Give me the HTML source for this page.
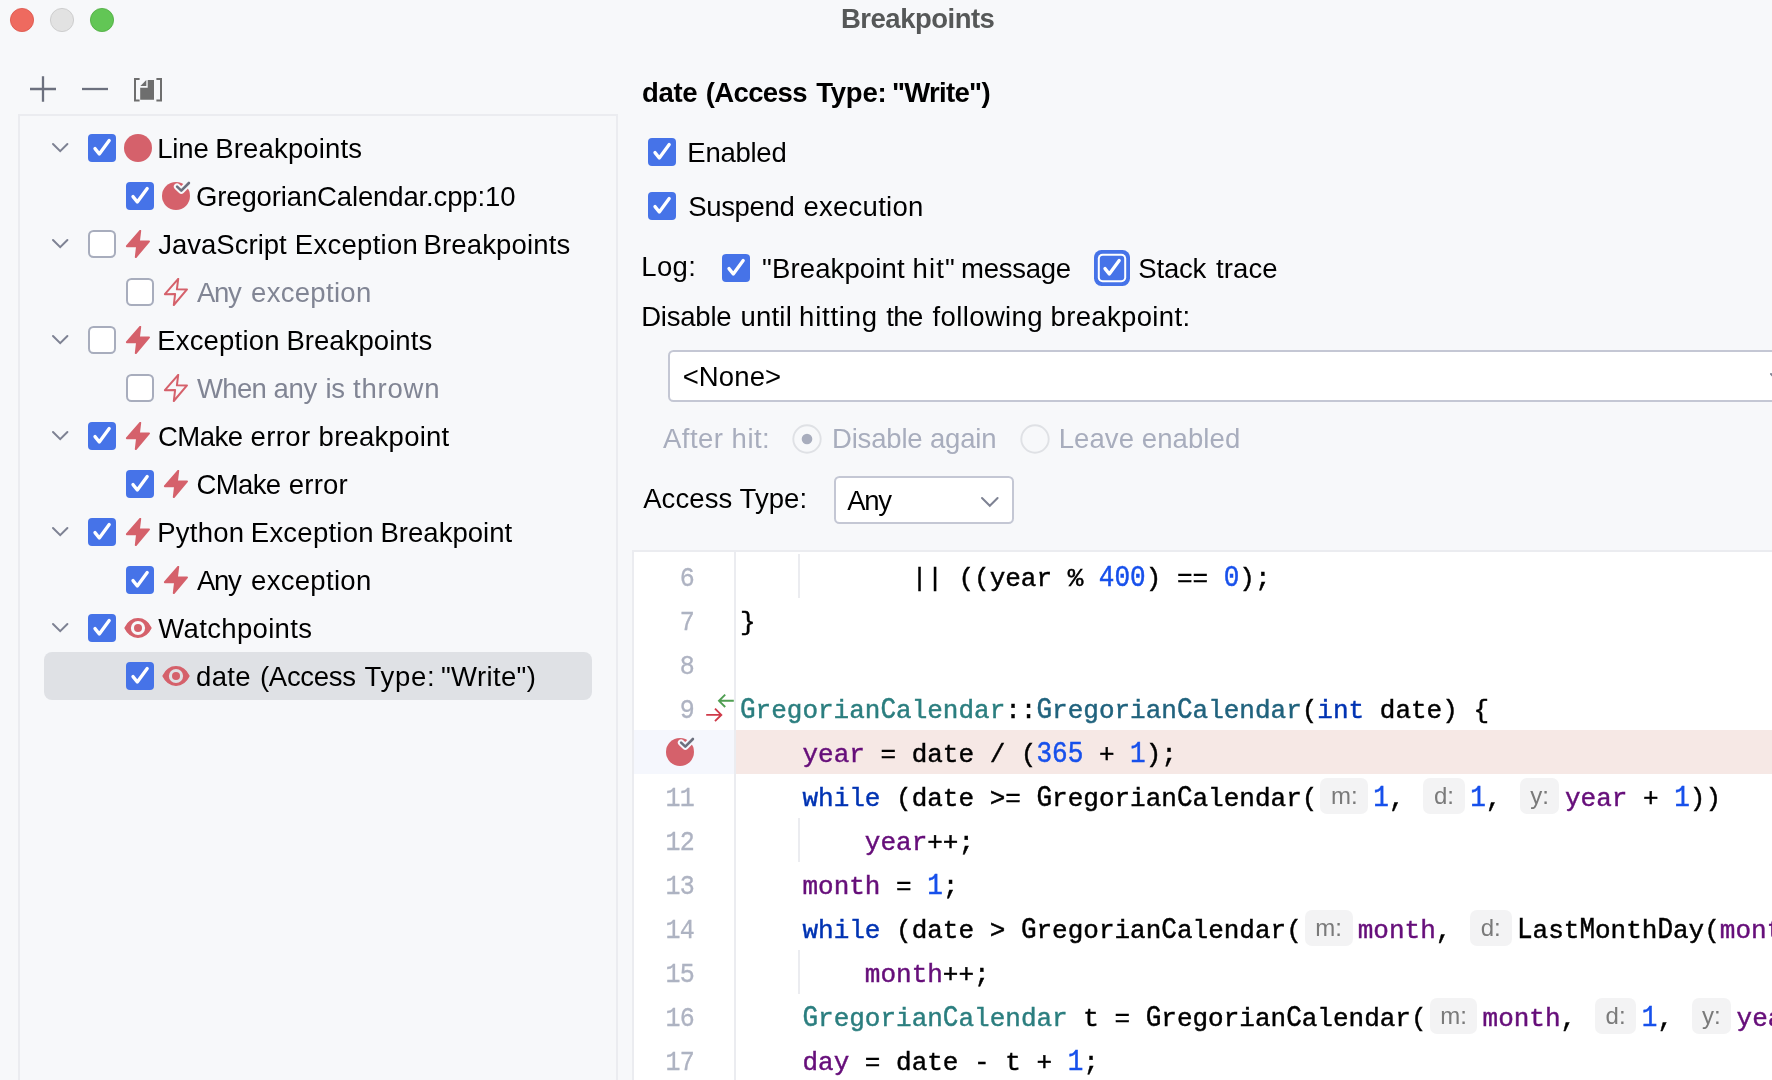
<!DOCTYPE html>
<html><head><meta charset="utf-8"><title>Breakpoints</title>
<style>
html,body{margin:0;padding:0}
body{width:1772px;height:1080px;overflow:hidden;background:#f7f8fa;font-family:"Liberation Sans", sans-serif;}
#w{position:relative;width:1772px;height:1080px;overflow:hidden;background:#f7f8fa;will-change:transform}
.a{position:absolute;display:block}
.t{position:absolute;white-space:pre;line-height:32px;font-family:"Liberation Sans", sans-serif}
#tree{position:absolute;left:18px;top:114px;width:596px;height:1000px;border:2px solid #ebecf0;box-sizing:content-box}
#sel{position:absolute;left:44px;top:652px;width:548px;height:48px;border-radius:8px;background:#dfe1e5}
#dd1{position:absolute;left:668px;top:350px;width:1200px;height:48px;border:2px solid #c4c7d4;border-radius:5.5px;background:#fff}
#dd2{position:absolute;left:834px;top:476px;width:176px;height:44px;border:2px solid #c4c7d4;border-radius:5.5px;background:#fff}
#ed{position:absolute;left:632px;top:550px;width:1200px;height:600px;border-left:2px solid #ebecf0;border-top:2px solid #ebecf0;background:#fff}
#gsep{position:absolute;left:734px;top:552px;width:2px;height:600px;background:#ebecf0}
#hl{position:absolute;left:736px;top:730px;width:1100px;height:44px;background:#f6e8e5}
#hlg{position:absolute;left:634px;top:730px;width:100px;height:44px;background:#f5f7fd}
.ig{position:absolute;left:798px;width:2px;background:#ebecf0}
.ln{position:absolute;left:634px;margin-top:4px;width:60px;text-align:right;font-family:"Liberation Mono", monospace;font-size:25px;letter-spacing:-0.7px;color:#aeb3c2;line-height:44px;height:44px;white-space:pre;transform-origin:0 29px;transform:scaleY(1.1);-webkit-text-stroke:0.3px}
.cl{position:absolute;left:740px;margin-top:3px;font-family:"Liberation Mono", monospace;font-size:26px;letter-spacing:0.00px;color:#000;line-height:44px;height:44px;white-space:pre;-webkit-text-stroke:0.45px}
.cl i{font-style:normal;display:inline-block;line-height:44px;transform-origin:0 29px;transform:scaleY(1.11)}
.h{display:inline-block;box-sizing:border-box;height:35.6px;line-height:35.6px;vertical-align:baseline;border-radius:7px;background:#f3f3f4;color:#7a7a7a;font-family:"Liberation Sans", sans-serif;font-size:24px;letter-spacing:0;text-align:center;position:relative;top:-2px;-webkit-text-stroke:0}
</style></head>
<body><div id="w">
<svg class="a" style="left:0;top:0" width="130" height="40"><circle cx="22" cy="20" r="11.6" fill="#ee6a5f" stroke="#dc5347" stroke-width="0.8"/><circle cx="62" cy="20" r="11.6" fill="#e2e2e2" stroke="#c6c6c6" stroke-width="0.8"/><circle cx="102" cy="20" r="11.6" fill="#62c655" stroke="#4dab3e" stroke-width="0.8"/></svg>
<svg class="a" style="left:0;top:60px" width="200" height="54" viewBox="0 60 200 54"><path d="M30 89 H56 M43 76.2 V101.8" stroke="#6c707e" stroke-width="2.3" fill="none"/><path d="M82 89 H108" stroke="#6c707e" stroke-width="2.3" fill="none"/><path d="M139.6 79 H135 V100.6 H139.6 M156.4 79 H161 V100.6 H156.4" stroke="#6e6e6e" stroke-width="2" fill="none"/><polygon points="147.7,79.9 154,79.9 154,99.8 140.2,99.8 140.2,87.8 147.7,87.8" fill="#6e6e6e"/><polygon points="140.4,86 146.3,80.1 146.3,86" fill="#6e6e6e"/></svg>
<div id="tree"></div>
<div id="sel"></div>
<div id="dd1"></div>
<div id="dd2"></div>
<div id="ed"></div>
<div id="hlg"></div>
<div id="hl"></div>
<div id="gsep"></div>
<div class="ig" style="top:554px;height:44px"></div>
<div class="ig" style="top:818px;height:44px"></div>
<div class="ig" style="top:950px;height:44px"></div>
<svg class="a" style="left:49.80px;top:141.30px" width="20.4" height="13.2"><path d="M3 3 L10.2 10.2 L17.4 3" fill="none" stroke="#7e8293" stroke-width="2" stroke-linecap="round" stroke-linejoin="miter"/></svg><svg class="a" style="left:88px;top:134px" width="28" height="28" viewBox="0 0 28 28"><rect width="28" height="28" rx="4" fill="#4673e8"/><path d="M7 14.6 L11.3 20 L21.2 6.6" fill="none" stroke="#fff" stroke-width="3.3" stroke-linecap="round" stroke-linejoin="round"/></svg><svg class="a" style="left:124px;top:134px" width="28" height="28"><circle cx="14" cy="14" r="14" fill="#d5616b"/></svg><svg class="a" style="left:126px;top:182px" width="28" height="28" viewBox="0 0 28 28"><rect width="28" height="28" rx="4" fill="#4673e8"/><path d="M7 14.6 L11.3 20 L21.2 6.6" fill="none" stroke="#fff" stroke-width="3.3" stroke-linecap="round" stroke-linejoin="round"/></svg><svg class="a" style="left:162px;top:180px;overflow:visible" width="30" height="30" viewBox="0 -2 30 30"><circle cx="14" cy="14" r="14" fill="#d5616b"/><path d="M15.1 4.6 L19.3 8.6 L26.9 1.0" fill="none" stroke="#f7f8fa" stroke-width="6.5" stroke-linecap="round" stroke-linejoin="round"/><path d="M15.1 4.6 L19.3 8.6 L26.9 1.0" fill="none" stroke="#6c707e" stroke-width="2.6" stroke-linecap="round" stroke-linejoin="round"/></svg><svg class="a" style="left:49.80px;top:237.30px" width="20.4" height="13.2"><path d="M3 3 L10.2 10.2 L17.4 3" fill="none" stroke="#7e8293" stroke-width="2" stroke-linecap="round" stroke-linejoin="miter"/></svg><svg class="a" style="left:88px;top:230px" width="28" height="28" viewBox="0 0 28 28"><rect x="1" y="1" width="26" height="26" rx="4.5" fill="#fff" stroke="#a8adbd" stroke-width="2"/></svg><svg class="a" style="left:124px;top:230px" width="28" height="28"><polygon points="16.2,0.8 14.9,11.3 25.0,11.4 11.8,27.0 13.1,16.1 2.9,16.2" fill="#d5616b" stroke="#d5616b" stroke-width="2" stroke-linejoin="round"/></svg><svg class="a" style="left:126px;top:278px" width="28" height="28" viewBox="0 0 28 28"><rect x="1" y="1" width="26" height="26" rx="4.5" fill="#fff" stroke="#a8adbd" stroke-width="2"/></svg><svg class="a" style="left:162px;top:278px" width="28" height="28"><polygon points="16.2,0.8 14.9,11.3 25.0,11.4 11.8,27.0 13.1,16.1 2.9,16.2" fill="none" stroke="#d5616b" stroke-width="2" stroke-linejoin="round"/></svg><svg class="a" style="left:49.80px;top:333.30px" width="20.4" height="13.2"><path d="M3 3 L10.2 10.2 L17.4 3" fill="none" stroke="#7e8293" stroke-width="2" stroke-linecap="round" stroke-linejoin="miter"/></svg><svg class="a" style="left:88px;top:326px" width="28" height="28" viewBox="0 0 28 28"><rect x="1" y="1" width="26" height="26" rx="4.5" fill="#fff" stroke="#a8adbd" stroke-width="2"/></svg><svg class="a" style="left:124px;top:326px" width="28" height="28"><polygon points="16.2,0.8 14.9,11.3 25.0,11.4 11.8,27.0 13.1,16.1 2.9,16.2" fill="#d5616b" stroke="#d5616b" stroke-width="2" stroke-linejoin="round"/></svg><svg class="a" style="left:126px;top:374px" width="28" height="28" viewBox="0 0 28 28"><rect x="1" y="1" width="26" height="26" rx="4.5" fill="#fff" stroke="#a8adbd" stroke-width="2"/></svg><svg class="a" style="left:162px;top:374px" width="28" height="28"><polygon points="16.2,0.8 14.9,11.3 25.0,11.4 11.8,27.0 13.1,16.1 2.9,16.2" fill="none" stroke="#d5616b" stroke-width="2" stroke-linejoin="round"/></svg><svg class="a" style="left:49.80px;top:429.30px" width="20.4" height="13.2"><path d="M3 3 L10.2 10.2 L17.4 3" fill="none" stroke="#7e8293" stroke-width="2" stroke-linecap="round" stroke-linejoin="miter"/></svg><svg class="a" style="left:88px;top:422px" width="28" height="28" viewBox="0 0 28 28"><rect width="28" height="28" rx="4" fill="#4673e8"/><path d="M7 14.6 L11.3 20 L21.2 6.6" fill="none" stroke="#fff" stroke-width="3.3" stroke-linecap="round" stroke-linejoin="round"/></svg><svg class="a" style="left:124px;top:422px" width="28" height="28"><polygon points="16.2,0.8 14.9,11.3 25.0,11.4 11.8,27.0 13.1,16.1 2.9,16.2" fill="#d5616b" stroke="#d5616b" stroke-width="2" stroke-linejoin="round"/></svg><svg class="a" style="left:126px;top:470px" width="28" height="28" viewBox="0 0 28 28"><rect width="28" height="28" rx="4" fill="#4673e8"/><path d="M7 14.6 L11.3 20 L21.2 6.6" fill="none" stroke="#fff" stroke-width="3.3" stroke-linecap="round" stroke-linejoin="round"/></svg><svg class="a" style="left:162px;top:470px" width="28" height="28"><polygon points="16.2,0.8 14.9,11.3 25.0,11.4 11.8,27.0 13.1,16.1 2.9,16.2" fill="#d5616b" stroke="#d5616b" stroke-width="2" stroke-linejoin="round"/></svg><svg class="a" style="left:49.80px;top:525.30px" width="20.4" height="13.2"><path d="M3 3 L10.2 10.2 L17.4 3" fill="none" stroke="#7e8293" stroke-width="2" stroke-linecap="round" stroke-linejoin="miter"/></svg><svg class="a" style="left:88px;top:518px" width="28" height="28" viewBox="0 0 28 28"><rect width="28" height="28" rx="4" fill="#4673e8"/><path d="M7 14.6 L11.3 20 L21.2 6.6" fill="none" stroke="#fff" stroke-width="3.3" stroke-linecap="round" stroke-linejoin="round"/></svg><svg class="a" style="left:124px;top:518px" width="28" height="28"><polygon points="16.2,0.8 14.9,11.3 25.0,11.4 11.8,27.0 13.1,16.1 2.9,16.2" fill="#d5616b" stroke="#d5616b" stroke-width="2" stroke-linejoin="round"/></svg><svg class="a" style="left:126px;top:566px" width="28" height="28" viewBox="0 0 28 28"><rect width="28" height="28" rx="4" fill="#4673e8"/><path d="M7 14.6 L11.3 20 L21.2 6.6" fill="none" stroke="#fff" stroke-width="3.3" stroke-linecap="round" stroke-linejoin="round"/></svg><svg class="a" style="left:162px;top:566px" width="28" height="28"><polygon points="16.2,0.8 14.9,11.3 25.0,11.4 11.8,27.0 13.1,16.1 2.9,16.2" fill="#d5616b" stroke="#d5616b" stroke-width="2" stroke-linejoin="round"/></svg><svg class="a" style="left:49.80px;top:621.30px" width="20.4" height="13.2"><path d="M3 3 L10.2 10.2 L17.4 3" fill="none" stroke="#7e8293" stroke-width="2" stroke-linecap="round" stroke-linejoin="miter"/></svg><svg class="a" style="left:88px;top:614px" width="28" height="28" viewBox="0 0 28 28"><rect width="28" height="28" rx="4" fill="#4673e8"/><path d="M7 14.6 L11.3 20 L21.2 6.6" fill="none" stroke="#fff" stroke-width="3.3" stroke-linecap="round" stroke-linejoin="round"/></svg><svg class="a" style="left:124px;top:618px" width="28" height="20" viewBox="0 0 28 20"><path d="M1.1 10 C4.2 3.6 8.8 0.8 14 0.8 C19.2 0.8 23.8 3.6 26.9 10 C23.8 16.4 19.2 19.2 14 19.2 C8.8 19.2 4.2 16.4 1.1 10 Z" fill="#d5616b" stroke="#d5616b" stroke-width="1.6" stroke-linejoin="round"/><circle cx="14" cy="10" r="7.1" fill="#f7f8fa"/><circle cx="14" cy="10" r="4" fill="#d5616b"/></svg><svg class="a" style="left:126px;top:662px" width="28" height="28" viewBox="0 0 28 28"><rect width="28" height="28" rx="4" fill="#4673e8"/><path d="M7 14.6 L11.3 20 L21.2 6.6" fill="none" stroke="#fff" stroke-width="3.3" stroke-linecap="round" stroke-linejoin="round"/></svg><svg class="a" style="left:162px;top:666px" width="28" height="20" viewBox="0 0 28 20"><path d="M1.1 10 C4.2 3.6 8.8 0.8 14 0.8 C19.2 0.8 23.8 3.6 26.9 10 C23.8 16.4 19.2 19.2 14 19.2 C8.8 19.2 4.2 16.4 1.1 10 Z" fill="#d5616b" stroke="#d5616b" stroke-width="1.6" stroke-linejoin="round"/><circle cx="14" cy="10" r="7.1" fill="#dfe1e5"/><circle cx="14" cy="10" r="4" fill="#d5616b"/></svg><svg class="a" style="left:648px;top:138px" width="28" height="28" viewBox="0 0 28 28"><rect width="28" height="28" rx="4" fill="#4673e8"/><path d="M7 14.6 L11.3 20 L21.2 6.6" fill="none" stroke="#fff" stroke-width="3.3" stroke-linecap="round" stroke-linejoin="round"/></svg><svg class="a" style="left:648px;top:192px" width="28" height="28" viewBox="0 0 28 28"><rect width="28" height="28" rx="4" fill="#4673e8"/><path d="M7 14.6 L11.3 20 L21.2 6.6" fill="none" stroke="#fff" stroke-width="3.3" stroke-linecap="round" stroke-linejoin="round"/></svg><svg class="a" style="left:722px;top:254px" width="28" height="28" viewBox="0 0 28 28"><rect width="28" height="28" rx="4" fill="#4673e8"/><path d="M7 14.6 L11.3 20 L21.2 6.6" fill="none" stroke="#fff" stroke-width="3.3" stroke-linecap="round" stroke-linejoin="round"/></svg><svg class="a" style="left:1094px;top:250px" width="36" height="36" viewBox="0 0 36 36"><rect width="36" height="36" rx="7.5" fill="#4673e8"/><rect x="3.8" y="3.8" width="28.4" height="28.4" rx="4.8" fill="#fff"/><rect x="5.8" y="5.8" width="24.4" height="24.4" rx="3" fill="#4673e8"/><path d="M11 18.6 L15.3 24 L25.2 10.6" fill="none" stroke="#fff" stroke-width="3.3" stroke-linecap="round" stroke-linejoin="round"/></svg><svg class="a" style="left:792px;top:424px" width="30" height="30"><circle cx="15" cy="15" r="13.7" fill="#f7f8fa" stroke="#dfe1e5" stroke-width="1.9"/><circle cx="15" cy="15" r="5.3" fill="#a8adbd"/></svg><svg class="a" style="left:1020px;top:424px" width="30" height="30"><circle cx="15" cy="15" r="13.7" fill="#f7f8fa" stroke="#dfe1e5" stroke-width="1.9"/></svg><svg class="a" style="left:979.20px;top:495.30px" width="21.6" height="13.8"><path d="M3 3 L10.8 10.8 L18.6 3" fill="none" stroke="#7e8293" stroke-width="2" stroke-linecap="round" stroke-linejoin="miter"/></svg><svg class="a" style="left:1767.80px;top:371.30px" width="21.6" height="13.8"><path d="M3 3 L10.8 10.8 L18.6 3" fill="none" stroke="#7e8293" stroke-width="2" stroke-linecap="round" stroke-linejoin="miter"/></svg>
<svg class="a" style="left:666px;top:736px;overflow:visible" width="30" height="30" viewBox="0 -2 30 30"><circle cx="14" cy="14" r="14" fill="#d5616b"/><path d="M15.1 4.6 L19.3 8.6 L26.9 1.0" fill="none" stroke="#f5f7fd" stroke-width="6.5" stroke-linecap="round" stroke-linejoin="round"/><path d="M15.1 4.6 L19.3 8.6 L26.9 1.0" fill="none" stroke="#6c707e" stroke-width="2.6" stroke-linecap="round" stroke-linejoin="round"/></svg><svg class="a" style="left:700px;top:690px" width="40" height="36" viewBox="700 690 40 36"><path d="M733.8 700.8 H719.6 M725.2 694.6 L719 700.8 L725.2 707" fill="none" stroke="#4f9e52" stroke-width="1.9"/><path d="M706.2 714.9 H720.6 M715 708.6 L721.3 714.9 L715 721.2" fill="none" stroke="#cf3a49" stroke-width="1.9"/></svg>
<span class="t" id="title" style="left:841.00px;top:3.00px;font-size:27.5px;letter-spacing:-0.504px;color:#565858;font-weight:700;">Breakpoints</span><span class="t" id="head_0" style="left:641.90px;top:77.00px;font-size:27.5px;letter-spacing:-0.283px;color:#000;font-weight:700;">date</span><span class="t" id="head_1" style="left:705.70px;top:77.00px;font-size:27.5px;letter-spacing:-0.616px;color:#000;font-weight:700;">(Access</span><span class="t" id="head_2" style="left:816.20px;top:77.00px;font-size:27.5px;letter-spacing:-0.186px;color:#000;font-weight:700;">Type:</span><span class="t" id="head_3" style="left:892.00px;top:77.00px;font-size:27.5px;letter-spacing:-0.704px;color:#000;font-weight:700;">"Write")</span><span class="t" id="r0_0" style="left:157.20px;top:133.00px;font-size:27.5px;letter-spacing:-0.166px;color:#000;">Line</span><span class="t" id="r0_1" style="left:215.30px;top:133.00px;font-size:27.5px;letter-spacing:0.153px;color:#000;">Breakpoints</span><span class="t" id="r1" style="left:196.00px;top:181.00px;font-size:27.5px;letter-spacing:-0.134px;color:#000;">GregorianCalendar.cpp:10</span><span class="t" id="r2_0" style="left:158.20px;top:229.00px;font-size:27.5px;letter-spacing:0.018px;color:#000;">JavaScript</span><span class="t" id="r2_1" style="left:294.80px;top:229.00px;font-size:27.5px;letter-spacing:0.291px;color:#000;">Exception</span><span class="t" id="r2_2" style="left:423.50px;top:229.00px;font-size:27.5px;letter-spacing:0.153px;color:#000;">Breakpoints</span><span class="t" id="r3_0" style="left:197.00px;top:277.00px;font-size:27.5px;letter-spacing:-1.368px;color:#818594;">Any</span><span class="t" id="r3_1" style="left:251.10px;top:277.00px;font-size:27.5px;letter-spacing:0.297px;color:#818594;">exception</span><span class="t" id="r4_0" style="left:157.20px;top:325.00px;font-size:27.5px;letter-spacing:0.191px;color:#000;">Exception</span><span class="t" id="r4_1" style="left:286.40px;top:325.00px;font-size:27.5px;letter-spacing:0.053px;color:#000;">Breakpoints</span><span class="t" id="r5_0" style="left:197.00px;top:373.00px;font-size:27.5px;letter-spacing:-0.681px;color:#818594;">When</span><span class="t" id="r5_1" style="left:273.40px;top:373.00px;font-size:27.5px;letter-spacing:-0.194px;color:#818594;">any</span><span class="t" id="r5_2" style="left:325.50px;top:373.00px;font-size:27.5px;letter-spacing:-0.310px;color:#818594;">is</span><span class="t" id="r5_3" style="left:353.10px;top:373.00px;font-size:27.5px;letter-spacing:0.771px;color:#818594;">thrown</span><span class="t" id="r6_0" style="left:158.00px;top:421.00px;font-size:27.5px;letter-spacing:-0.528px;color:#000;">CMake</span><span class="t" id="r6_1" style="left:250.60px;top:421.00px;font-size:27.5px;letter-spacing:0.374px;color:#000;">error</span><span class="t" id="r6_2" style="left:318.60px;top:421.00px;font-size:27.5px;letter-spacing:0.246px;color:#000;">breakpoint</span><span class="t" id="r7_0" style="left:196.50px;top:469.00px;font-size:27.5px;letter-spacing:-0.628px;color:#000;">CMake</span><span class="t" id="r7_1" style="left:288.70px;top:469.00px;font-size:27.5px;letter-spacing:0.249px;color:#000;">error</span><span class="t" id="r8_0" style="left:157.20px;top:517.00px;font-size:27.5px;letter-spacing:0.236px;color:#000;">Python</span><span class="t" id="r8_1" style="left:250.80px;top:517.00px;font-size:27.5px;letter-spacing:0.241px;color:#000;">Exception</span><span class="t" id="r8_2" style="left:380.40px;top:517.00px;font-size:27.5px;letter-spacing:0.041px;color:#000;">Breakpoint</span><span class="t" id="r9_0" style="left:197.00px;top:565.00px;font-size:27.5px;letter-spacing:-1.368px;color:#000;">Any</span><span class="t" id="r9_1" style="left:251.10px;top:565.00px;font-size:27.5px;letter-spacing:0.297px;color:#000;">exception</span><span class="t" id="r10" style="left:158.30px;top:613.00px;font-size:27.5px;letter-spacing:0.335px;color:#000;">Watchpoints</span><span class="t" id="r11_0" style="left:196.00px;top:661.00px;font-size:27.5px;letter-spacing:0.357px;color:#000;">date</span><span class="t" id="r11_1" style="left:260.00px;top:661.00px;font-size:27.5px;letter-spacing:-0.307px;color:#000;">(Access</span><span class="t" id="r11_2" style="left:364.60px;top:661.00px;font-size:27.5px;letter-spacing:0.720px;color:#000;">Type:</span><span class="t" id="r11_3" style="left:441.00px;top:661.00px;font-size:27.5px;letter-spacing:0.359px;color:#000;">"Write")</span><span class="t" id="en" style="left:687.30px;top:137.00px;font-size:27.5px;letter-spacing:-0.255px;color:#000;">Enabled</span><span class="t" id="sus_0" style="left:688.30px;top:191.00px;font-size:27.5px;letter-spacing:-0.362px;color:#000;">Suspend</span><span class="t" id="sus_1" style="left:803.40px;top:191.00px;font-size:27.5px;letter-spacing:0.272px;color:#000;">execution</span><span class="t" id="log" style="left:641.20px;top:251.00px;font-size:27.5px;letter-spacing:0.406px;color:#000;">Log:</span><span class="t" id="bph_0" style="left:762.10px;top:253.00px;font-size:27.5px;letter-spacing:0.121px;color:#000;">"Breakpoint</span><span class="t" id="bph_1" style="left:912.60px;top:253.00px;font-size:27.5px;letter-spacing:1.119px;color:#000;">hit"</span><span class="t" id="bph_2" style="left:961.00px;top:253.00px;font-size:27.5px;letter-spacing:-0.248px;color:#000;">message</span><span class="t" id="st_0" style="left:1138.30px;top:253.00px;font-size:27.5px;letter-spacing:-0.182px;color:#000;">Stack</span><span class="t" id="st_1" style="left:1216.00px;top:253.00px;font-size:27.5px;letter-spacing:0.114px;color:#000;">trace</span><span class="t" id="dis_0" style="left:641.20px;top:301.00px;font-size:27.5px;letter-spacing:-0.220px;color:#000;">Disable</span><span class="t" id="dis_1" style="left:740.50px;top:301.00px;font-size:27.5px;letter-spacing:0.215px;color:#000;">until</span><span class="t" id="dis_2" style="left:799.10px;top:301.00px;font-size:27.5px;letter-spacing:0.752px;color:#000;">hitting</span><span class="t" id="dis_3" style="left:886.30px;top:301.00px;font-size:27.5px;letter-spacing:-0.617px;color:#000;">the</span><span class="t" id="dis_4" style="left:932.50px;top:301.00px;font-size:27.5px;letter-spacing:0.386px;color:#000;">following</span><span class="t" id="dis_5" style="left:1050.50px;top:301.00px;font-size:27.5px;letter-spacing:0.348px;color:#000;">breakpoint:</span><span class="t" id="none" style="left:682.70px;top:361.00px;font-size:27.5px;letter-spacing:0.120px;color:#000;">&lt;None&gt;</span><span class="t" id="ah" style="left:663.00px;top:423.00px;font-size:27.5px;letter-spacing:0.482px;color:#a8adbd;">After hit:</span><span class="t" id="da" style="left:832.00px;top:423.00px;font-size:27.5px;letter-spacing:-0.179px;color:#a8adbd;">Disable again</span><span class="t" id="le" style="left:1058.70px;top:423.00px;font-size:27.5px;letter-spacing:0.088px;color:#a8adbd;">Leave enabled</span><span class="t" id="at" style="left:643.20px;top:483.00px;font-size:27.5px;letter-spacing:0.082px;color:#000;">Access Type:</span><span class="t" id="any" style="left:847.30px;top:485.00px;font-size:27.5px;letter-spacing:-1.368px;color:#000;">Any</span>
<div class="ln" style="top:554px">6</div><div class="cl" style="top:554px">           || ((year % <span style="color:#1750eb"><i>400</i></span>) == <span style="color:#1750eb"><i>0</i></span>);</div><div class="ln" style="top:598px">7</div><div class="cl" style="top:598px">}</div><div class="ln" style="top:642px">8</div><div class="cl" style="top:642px"></div><div class="ln" style="top:686px">9</div><div class="cl" style="top:686px"><span style="color:#2b7e7f"><i>G</i>regorian<i>C</i>alendar</span>::<span style="color:#20627d"><i>G</i>regorian<i>C</i>alendar</span>(<span style="color:#0033b3">int</span> date) {</div><div class="cl" style="top:730px">    <span style="color:#660e7a">year</span> = date / (<span style="color:#1750eb"><i>365</i></span> + <span style="color:#1750eb"><i>1</i></span>);</div><div class="ln" style="top:774px">11</div><div class="cl" style="top:774px">    <span style="color:#0033b3">while</span> (date &gt;= <i>G</i>regorian<i>C</i>alendar(<span class="h" style="width:47.8px;margin-left:3.0px;margin-right:5.2px">m:</span><span style="color:#1750eb"><i>1</i></span>, <span class="h" style="width:41.6px;margin-left:3.0px;margin-right:5.4px">d:</span><span style="color:#1750eb"><i>1</i></span>, <span class="h" style="width:39.3px;margin-left:3.0px;margin-right:5.7px">y:</span><span style="color:#660e7a">year</span> + <span style="color:#1750eb"><i>1</i></span>))</div><div class="ln" style="top:818px">12</div><div class="cl" style="top:818px">        <span style="color:#660e7a">year</span>++;</div><div class="ln" style="top:862px">13</div><div class="cl" style="top:862px">    <span style="color:#660e7a">month</span> = <span style="color:#1750eb"><i>1</i></span>;</div><div class="ln" style="top:906px">14</div><div class="cl" style="top:906px">    <span style="color:#0033b3">while</span> (date &gt; <i>G</i>regorian<i>C</i>alendar(<span class="h" style="width:47.8px;margin-left:3.0px;margin-right:5.2px">m:</span><span style="color:#660e7a">month</span>, <span class="h" style="width:41.6px;margin-left:3.0px;margin-right:5.4px">d:</span><i>L</i>ast<i>M</i>onth<i>D</i>ay(<span style="color:#660e7a">month</span>, <span class="h" style="width:39.3px;margin-left:3.0px;margin-right:5.7px">y:</span><span style="color:#660e7a">year</span>)))</div><div class="ln" style="top:950px">15</div><div class="cl" style="top:950px">        <span style="color:#660e7a">month</span>++;</div><div class="ln" style="top:994px">16</div><div class="cl" style="top:994px">    <span style="color:#2b7e7f"><i>G</i>regorian<i>C</i>alendar</span> t = <i>G</i>regorian<i>C</i>alendar(<span class="h" style="width:47.8px;margin-left:3.0px;margin-right:5.2px">m:</span><span style="color:#660e7a">month</span>, <span class="h" style="width:41.6px;margin-left:3.0px;margin-right:5.4px">d:</span><span style="color:#1750eb"><i>1</i></span>, <span class="h" style="width:39.3px;margin-left:3.0px;margin-right:5.7px">y:</span><span style="color:#660e7a">year</span>);</div><div class="ln" style="top:1038px">17</div><div class="cl" style="top:1038px">    <span style="color:#660e7a">day</span> = date - t + <span style="color:#1750eb"><i>1</i></span>;</div>
</div></body></html>
